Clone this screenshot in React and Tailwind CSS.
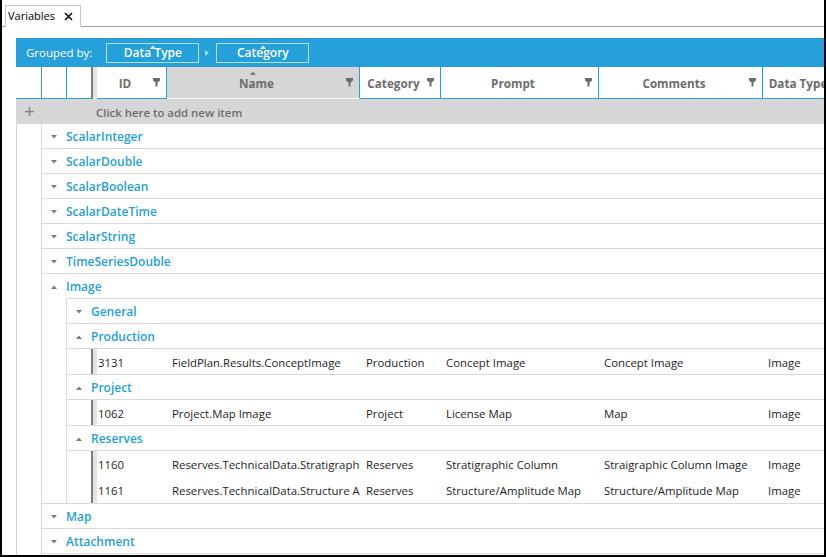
import React from "react";

const COLS = [
  { label: "ID", w: "w-[70px]", pad: "pl-[1px]" },
  { label: "Name", w: "w-[193px]", pad: "pl-[5px]", sorted: true },
  { label: "Category", w: "w-[81px]", pad: "pl-[6px]" },
  { label: "Prompt", w: "w-[158px]", pad: "pl-[5px]" },
  { label: "Comments", w: "w-[164px]", pad: "pl-[5px]" },
  { label: "Data Type", w: "w-[84px]", pad: "pl-[5px]" },
];

const GROUPS = [
  { name: "ScalarInteger" },
  { name: "ScalarDouble" },
  { name: "ScalarBoolean" },
  { name: "ScalarDateTime" },
  { name: "ScalarString" },
  { name: "TimeSeriesDouble" },
  {
    name: "Image",
    open: true,
    children: [
      { name: "General" },
      {
        name: "Production",
        rows: [["3131", "FieldPlan.Results.ConceptImage", "Production", "Concept Image", "Concept Image", "Image"]],
      },
      {
        name: "Project",
        rows: [["1062", "Project.Map Image", "Project", "License Map", "Map", "Image"]],
      },
      {
        name: "Reserves",
        rows: [
          ["1160", "Reserves.TechnicalData.Stratigraphic Column", "Reserves", "Stratigraphic Column", "Straigraphic Column Image", "Image"],
          ["1161", "Reserves.TechnicalData.Structure Amplitude Map", "Reserves", "Structure/Amplitude Map", "Structure/Amplitude Map", "Image"],
        ],
      },
    ],
  },
  { name: "Map" },
  { name: "Attachment" },
];

function Tri({ up }) {
  return (
    <svg width="6" height="4" viewBox="0 0 6 4">
      <path d={up ? "M0 4L3 0.5L6 4Z" : "M0 0H6L3 3.5Z"} fill="#7a7a7a" />
    </svg>
  );
}

function Funnel() {
  return (
    <svg width="7" height="9" viewBox="0 0 7 9" className="shrink-0">
      <path d="M0 0H7V2.5L4.5 4.5V8.5H2.5V4.5L0 2.5Z" fill="#6d6d6d" />
    </svg>
  );
}

function GroupRow({ name, open, border = true }) {
  return (
    <div className={`flex items-center pt-[2px] ${border ? "h-[25px] border-b border-[#dadada]" : "h-[24px]"}`}>
      <div className="w-[24px] flex justify-center">
        <Tri up={open} />
      </div>
      <span className="text-[#25a0da] font-semibold">{name}</span>
    </div>
  );
}

function DataRow({ cells, border }) {
  return (
    <div className={`flex h-[26px] ${border ? "border-b border-[#dadada]" : ""}`}>
      <div className="w-[24px] shrink-0" />
      <div className="w-[6px] shrink-0 border-l-2 border-[#7d7d7d] bg-[#e4e4e4]" />
      {cells.map((c, i) => (
        <div
          key={i}
          className={`${COLS[i].w} ${COLS[i].pad} shrink-0 flex items-center pt-[2px] overflow-hidden whitespace-nowrap text-[11.4px] text-[#1e1e1e]`}
        >
          {c}
        </div>
      ))}
    </div>
  );
}

export default function App() {
  return (
    <div className="w-[826px] h-[557px] overflow-hidden bg-white border-x-2 border-b-2 border-black flex flex-col text-[12px] font-['Open_Sans',sans-serif]">
      {/* tab strip */}
      <div className="flex h-[27px] shrink-0">
        <div className="w-[3px] border-b border-[#a0a0a0]" />
        <div className="mt-[5px] w-[76px] h-[22px] border border-b-0 border-[#c8c8c8] flex items-center pl-[2px] gap-[9px] text-[11px] text-black">
          <span>Variables</span>
          <svg width="9" height="9" viewBox="0 0 9 9">
            <path d="M1 1L8 8M8 1L1 8" stroke="#111" strokeWidth="1.6" />
          </svg>
        </div>
        <div className="flex-1 border-b border-[#a0a0a0]" />
      </div>

      <div className="mt-[11px] ml-[14px] flex-1 overflow-hidden">
        {/* grouping panel */}
        <div className="h-[29px] bg-[#25a0da] flex items-center pl-[10px] text-white whitespace-nowrap">
          <span className="text-[11.5px]">Grouped by:</span>
          <div className="relative ml-[14px] w-[93px] h-[20px] border border-[#b5def3] flex items-center justify-center font-semibold">
            <svg width="6" height="4" viewBox="0 0 6 4" className="absolute top-[1px] left-[43px]">
              <path d="M0 4L3 0.5L6 4Z" fill="#ffffff" />
            </svg>
            Data Type
          </div>
          <svg width="4" height="6" viewBox="0 0 4 6" className="mx-[6px]">
            <path d="M0 0L4 3L0 6Z" fill="#a9d9f2" />
          </svg>
          <div className="relative ml-[1px] w-[93px] h-[20px] border border-[#b5def3] flex items-center justify-center font-semibold">
            <svg width="6" height="4" viewBox="0 0 6 4" className="absolute top-[1px] left-[43px]">
              <path d="M0 4L3 0.5L6 4Z" fill="#ffffff" />
            </svg>
            Category
          </div>
        </div>

        {/* header */}
        <div className="flex h-[32px] whitespace-nowrap">
          <div className="w-[26px] shrink-0 border-r border-b border-[#25a0da]" />
          <div className="w-[25px] shrink-0 border-r border-b border-[#25a0da]" />
          <div className="w-[24px] shrink-0 border-b border-[#25a0da]" />
          <div className="w-[6px] shrink-0 border-l-2 border-[#7d7d7d] bg-[#e4e4e4]" />
          {COLS.map((c) => (
            <div
              key={c.label}
              className={`${c.w} shrink-0 relative flex items-center border-r border-b border-r-[#25a0da] pr-[6px] ${
                c.sorted ? "bg-[#d6d6d6] border-b-white" : "border-b-[#25a0da]"
              }`}
            >
              {c.sorted && (
                <svg width="6" height="4" viewBox="0 0 6 4" className="absolute top-[4px] left-[83px]">
                  <path d="M0 4L3 0.5L6 4Z" fill="#7a7a7a" />
                </svg>
              )}
              <span className="flex-1 text-center font-bold text-[11.7px] text-[#6d6d6d] pt-[3px]">{c.label}</span>
              <Funnel />
            </div>
          ))}
        </div>

        {/* new item row */}
        <div className="flex items-center h-[25px] bg-[#d6d6d6] text-[#6d6d6d] font-semibold whitespace-nowrap">
          <div className="w-[26px] flex justify-center pl-[1px]">
            <svg width="9" height="9" viewBox="0 0 9 9">
              <path d="M4.5 0V9M0 4.5H9" stroke="#858585" strokeWidth="1.5" />
            </svg>
          </div>
          <span className="ml-[54px] pt-[2px] text-[11.4px]">Click here to add new item</span>
        </div>

        {/* body */}
        <div className="border-l border-[#d2d2d2] h-full whitespace-nowrap">
          <div className="ml-[24px] border-l border-[#dadada] h-full">
            {GROUPS.map((g) =>
              g.open ? (
                <div key={g.name} className="border-b border-[#dadada]">
                  <GroupRow name={g.name} open border={false} />
                  <div className="ml-[24px] border-l border-t border-[#dadada]">
                    {g.children.map((c, ci) => (
                      <div key={c.name}>
                        <GroupRow name={c.name} open={!!c.rows} />
                        {c.rows &&
                          c.rows.map((r, ri) => (
                            <DataRow
                              key={ri}
                              cells={r}
                              border={ri === c.rows.length - 1 && ci !== g.children.length - 1}
                            />
                          ))}
                      </div>
                    ))}
                  </div>
                </div>
              ) : (
                <GroupRow key={g.name} name={g.name} />
              )
            )}
          </div>
        </div>
      </div>
    </div>
  );
}
